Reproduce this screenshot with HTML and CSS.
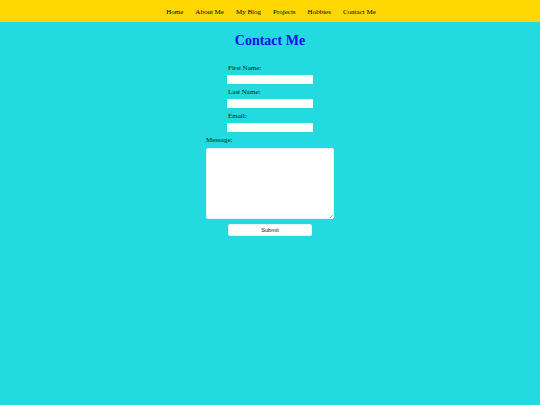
FILE: index.html
```html
<!DOCTYPE html>
<html lang="en">
<head>
<meta charset="utf-8">
<title>Contact Me</title>
<link rel="stylesheet" href="styles.css">
</head>
<body>
<nav class="nav">
  <a class="nav-link" href="#">Home</a>
  <a class="nav-link" href="#">About Me</a>
  <a class="nav-link" href="#">My Blog</a>
  <a class="nav-link" href="#">Projects</a>
  <a class="nav-link" href="#">Hobbies</a>
  <a class="nav-link" href="#">Contact Me</a>
</nav>
<main class="main">
  <h1 class="title">Contact Me</h1>
  <form class="form">
    <div class="field">
      <label class="label" for="fn">First Name:</label>
      <input class="input" id="fn" type="text">
    </div>
    <div class="field">
      <label class="label" for="ln">Last Name:</label>
      <input class="input" id="ln" type="text">
    </div>
    <div class="field">
      <label class="label" for="em">Email:</label>
      <input class="input" id="em" type="email">
    </div>
    <div class="field field-msg">
      <label class="label" for="msg">Message:</label>
      <div class="textarea-wrap">
        <textarea class="textarea" id="msg"></textarea>
        <span class="grip"></span>
      </div>
    </div>
    <button class="submit" type="submit">Submit</button>
  </form>
</main>
</body>
</html>
```
FILE: styles.css
```css
html, body {
  margin: 0;
  padding: 0;
}
body {
  background: #22dae0;
  font-family: "Liberation Serif", "Times New Roman", serif;
  min-height: 405px;
}
.nav {
  background: #ffd700;
  height: 22px;
  display: flex;
  justify-content: center;
  align-items: center;
  gap: 12px;
  padding-left: 2px;
}
.nav-link {
  font-size: 7px;
  color: #000;
  text-decoration: none;
  line-height: 8px;
  padding-top: 1px;
}
.main {
  display: flex;
  flex-direction: column;
  align-items: center;
}
.title {
  font-size: 14px;
  color: #1010e8;
  margin: 11px 0 0;
  line-height: 16px;
  font-weight: bold;
}
.form {
  margin-top: 15px;
  display: flex;
  flex-direction: column;
  align-items: center;
}
.field {
  display: flex;
  flex-direction: column;
  margin-bottom: 4px;
}
.label {
  font-size: 7px;
  line-height: 8px;
  color: #001a1a;
  margin-bottom: 3px;
  padding-left: 1px;
}
.input {
  box-sizing: border-box;
  width: 86px;
  height: 9px;
  border: 1px solid #f0fafa;
  background: #fff;
  padding: 0;
  margin: 0;
}
.field-msg {
  margin-bottom: 5px;
}
.field-msg .label {
  margin-bottom: 4px;
  padding-left: 0;
}
.textarea-wrap {
  position: relative;
  width: 128px;
  height: 71px;
}
.textarea {
  display: block;
  box-sizing: border-box;
  width: 128px;
  height: 71px;
  border: 1px solid #e6f6f6;
  border-radius: 2px;
  background: #fff;
  padding: 0;
  margin: 0;
  resize: none;
}
.grip {
  position: absolute;
  right: 1px;
  bottom: 1px;
  width: 3px;
  height: 3px;
  background: linear-gradient(135deg, transparent 45%, #aaa 50%, transparent 65%);
}
.submit {
  box-sizing: border-box;
  width: 84px;
  height: 12px;
  background: #fff;
  border: 1px solid #e6f6f6;
  border-radius: 2px;
  font-family: "Liberation Sans", Arial, sans-serif;
  font-size: 5.6px;
  color: #111;
  padding: 0;
  line-height: 10px;
}
```
